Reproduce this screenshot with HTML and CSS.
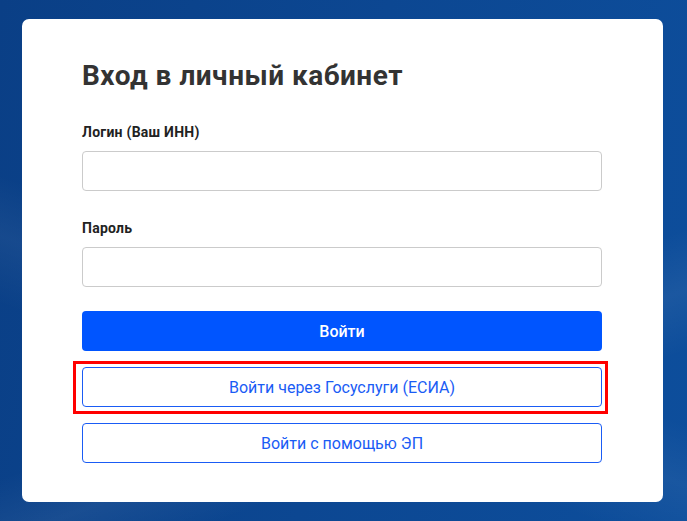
FILE: index.html
```html
<!DOCTYPE html>
<html lang="ru">

<head>
    <meta charset="utf-8" />
    <title>Вход в личный кабинет</title>
    <link rel="stylesheet" href="styles.css">
</head>

<body>
    <div class="login">
        <h1 class="login-title">Вход в личный кабинет</h1>
        <form action="" method="post">
            <label class="field-label" for="login">Логин (Ваш ИНН)</label>
            <input type="text" id="login" class="field-input" />
            <label class="field-label" for="password">Пароль</label>
            <input type="password" id="password" class="field-input" />
            <button type="button" class="btn btn-primary">Войти</button>
            <div class="highlight">
                <button type="button" class="btn btn-outline">Войти через Госуслуги (ЕСИА)</button>
            </div>
            <button type="button" class="btn btn-outline btn-last">Войти с помощью ЭП</button>
        </form>
    </div>
</body>

</html>
```

FILE: styles.css
```css
* {
    margin: 0;
    padding: 0;
    box-sizing: border-box;
}

html,
body {
    height: 100%;
}

body {
    padding: 19px 24px 19px 22px;
    font-family: Roboto, "Noto Sans", sans-serif;
    color: #333;
    background:
        linear-gradient(160deg, transparent 62%, rgba(255, 255, 255, 0.06) 70%, transparent 78%),
        linear-gradient(200deg, transparent 55%, rgba(255, 255, 255, 0.05) 63%, transparent 72%),
        linear-gradient(100deg, #0a3f86 0%, #0c4792 50%, #0d4e9c 100%);
}

.login {
    width: 641px;
    height: 483px;
    padding: 41px 61px 39px 60px;
    background: #fff;
    border-radius: 7px;
}

.login-title {
    font-size: 28px;
    line-height: 32px;
    font-weight: 700;
    letter-spacing: 0.5px;
    color: #333;
}

.field-label {
    display: block;
    margin-top: 30px;
    font-size: 14px;
    line-height: 20px;
    font-weight: 700;
    letter-spacing: 0.25px;
    color: #222;
}

.field-label + .field-input + .field-label {
    margin-top: 27px;
}

.field-input {
    display: block;
    width: 100%;
    height: 40px;
    margin-top: 9px;
    border: 1px solid #cbcbcb;
    border-radius: 4px;
    background: #fff;
    font-family: inherit;
    font-size: 15px;
    padding: 0 12px;
}

.btn {
    display: block;
    width: 100%;
    height: 40px;
    border-radius: 4px;
    font-family: Roboto, "Noto Sans", sans-serif;
    font-size: 16px;
    cursor: pointer;
}

.btn-primary {
    margin-top: 24px;
    border: 0;
    background: #0055ff;
    color: #fff;
    font-weight: 500;
}

.btn-outline {
    border: 1px solid #1a5cf5;
    background: #fff;
    color: #1a5cf5;
    font-weight: 400;
}

.highlight {
    margin: 10px -6px 0 -9px;
    padding: 3px 3px 4px 6px;
    border: 3px solid #f00;
}

.btn-last {
    margin-top: 9px;
}
```
